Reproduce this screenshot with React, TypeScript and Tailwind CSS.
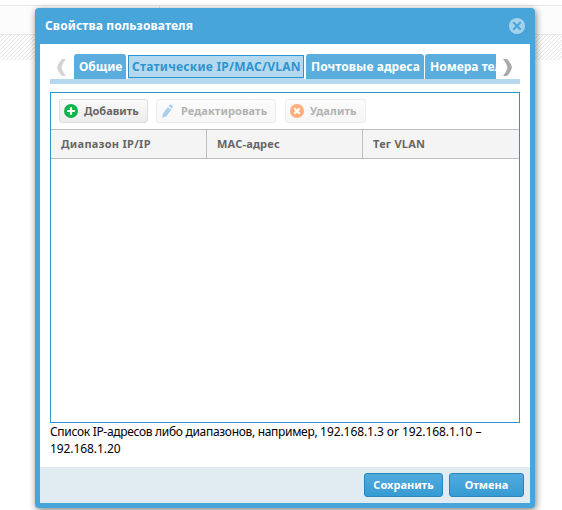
import React from "react";

type ToolProps = { label: string; className: string; textClass: string; disabled?: boolean; children: React.ReactNode };

function ToolButton({ label, className, textClass, disabled, children }: ToolProps) {
  return (
    <button
      disabled={disabled}
      className={`flex h-6 items-center rounded-[3px] border bg-gradient-to-b pl-[4px] ${
        disabled ? "border-[#ededed] from-[#fcfcfc] to-[#f6f6f6] text-[#b2b2b2]" : "border-[#dddddd] from-[#fafafa] to-[#ececec] text-[#666666]"
      } ${className}`}
    >
      {children}
      <span className={textClass}>{label}</span>
    </button>
  );
}

export default function App() {
  return (
    <div className="relative h-[510px] w-[562px] overflow-hidden bg-white font-['Noto_Sans',sans-serif] text-[11px] leading-[16px] font-bold whitespace-nowrap">
      <div className="mt-[5px] flex h-[30px] border-y border-[#e8e8e8] bg-[#fcfcfd]">
        <div className="w-[160px] border-r border-[#e8e8e8]" />
      </div>
      <div className="h-[25px] bg-[repeating-linear-gradient(135deg,#ffffff_0px,#ffffff_1.3px,#e4e4e4_2.1px,#ffffff_2.828px)]" />

      <section className="absolute top-[8px] left-[35px] flex h-[500px] w-[500px] flex-col rounded-[4px] bg-[#48a5da] px-[5px] pb-[5px] shadow-[1px_2px_7px_rgba(0,0,0,0.5)]">
        <header className="flex h-9 shrink-0 items-center justify-between pr-[5px] pl-[5px] text-white">
          <h1 className="text-[12px] tracking-[0.12px]">Свойства пользователя</h1>
          <svg width="16" height="16" viewBox="0 0 16 16">
            <circle cx="8" cy="8" r="8" fill="#a4d2ed" />
            <path d="M4.3 4.3l7.4 7.4M11.7 4.3l-7.4 7.4" stroke="#48a5da" strokeWidth="2" />
          </svg>
        </header>

        <main className="flex flex-1 flex-col bg-white px-[10px] pt-[10px]">
          <nav className="flex h-[30px] shrink-0 border-b-[5px] border-[#b4d9ef] text-[12px]">
            <div className="w-6 pt-[5px] pl-[7px]">
              <svg width="10" height="17" viewBox="0 0 10 17">
                <path d="M5 0h4Q5.5 4 4.5 8.5 5.5 13 9 17H5Q1 13 0 8.5 1 4 5 0z" fill="#d4d4d4" />
              </svg>
            </div>
            <div className="flex w-[422px] gap-[2px] overflow-hidden text-white">
              <div className="flex h-[25px] w-[52px] shrink-0 items-center rounded-t-[3px] bg-[#5aaddc] pl-[5px]">
                <span>Общие</span>
              </div>
              <div className="mt-[1px] flex h-[23px] w-[176px] shrink-0 items-center border border-[#2e94d0] bg-[#b4d9ef] pl-[3px] text-[#2e94d0] shadow-[0_1px_0_#b4d9ef]">
                <span className="tracking-[0.24px]">Статические IP/MAC/VLAN</span>
              </div>
              <div className="flex h-[25px] w-[118px] shrink-0 items-center rounded-t-[3px] bg-[#5aaddc] pl-[5px]">
                <span className="tracking-[0.07px]">Почтовые адреса</span>
              </div>
              <div className="-ml-px flex h-[25px] w-[130px] shrink-0 items-center rounded-t-[3px] bg-[#5aaddc] pl-[5px]">
                <span>Номера телефонов</span>
              </div>
            </div>
            <div className="pt-[5px] pl-[7px]">
              <svg width="10" height="17" viewBox="0 0 10 17">
                <path d="M0 0h4Q8 4 9 8.5 8 13 4 17H0Q3.5 13 4.5 8.5 3.5 4 0 0z" fill="#a9a9a9" />
              </svg>
            </div>
          </nav>

          <div className="mt-2 h-[331px] w-[470px] shrink-0 border border-[#2e94d0]">
            <div className="flex h-9 gap-2 pt-[6px] pl-2">
              <ToolButton label="Добавить" className="w-[89px]" textClass="ml-[6px]">
                <svg width="14" height="14" viewBox="0 0 14 14">
                  <circle cx="7" cy="7" r="7" fill="#0fb54a" />
                  <path d="M7 3.2v7.6M3.2 7h7.6" stroke="#fff" strokeWidth="2.2" />
                </svg>
              </ToolButton>
              <ToolButton label="Редактировать" className="w-[120px]" textClass="ml-[6px] tracking-[0.08px]" disabled>
                <svg width="14" height="14" viewBox="0 0 14 14" fill="#a7cfea">
                  <path d="M1.2 13.8l.7-4.4L6.8 3.2l3.6 2.5-5 6.5zM7.6 2.2l1-1.3q.8-.9 2.2 0t.9 2.2l-.8 1.4z" />
                </svg>
              </ToolButton>
              <ToolButton label="Удалить" className="ml-px w-[81px]" textClass="ml-[6px] tracking-[0.1px]" disabled>
                <svg width="14" height="14" viewBox="0 0 14 14">
                  <circle cx="7" cy="7" r="7" fill="#ffad7a" />
                  <path d="M4.3 4.3l5.4 5.4M9.7 4.3L4.3 9.7" stroke="#fff" strokeWidth="2.2" />
                </svg>
              </ToolButton>
            </div>
            <div className="flex h-[30px] border-y border-[#c0c0c0] bg-[#f4f4f4] text-[#666666]">
              <div className="flex w-[156px] items-center border-r border-[#c0c0c0] pl-[10px]"><span className="tracking-[0.3px]">Диапазон IP/IP</span></div>
              <div className="flex w-[156px] items-center border-r border-[#c0c0c0] pl-[10px]"><span className="tracking-[0.2px]">MAC-адрес</span></div>
              <div className="flex items-center pl-[10px]"><span className="tracking-[0.25px]">Тег VLAN</span></div>
            </div>
          </div>
          <p className="text-[12px] leading-[17px] font-normal text-black">
            <span className="tracking-[-0.31px]">Список IP-адресов либо диапазонов, например, </span>
            <span className="tracking-[-0.08px]">192.168.1.3 or 192.168.1.10 –</span>
            <br />
            <span className="tracking-[-0.08px]">192.168.1.20</span>
          </p>
        </main>

        <footer className="flex h-9 shrink-0 items-center justify-end gap-[6px] bg-[#e1ecf2] pr-[6px] text-white">
          <button className="h-6 w-[79px] rounded-[3px] border border-[#2587bd] bg-gradient-to-b from-[#51abdd] to-[#359bd3]"><span>Сохранить</span></button>
          <button className="h-6 w-[75px] rounded-[3px] border border-[#2587bd] bg-gradient-to-b from-[#51abdd] to-[#359bd3]"><span>Отмена</span></button>
        </footer>
      </section>
    </div>
  );
}
